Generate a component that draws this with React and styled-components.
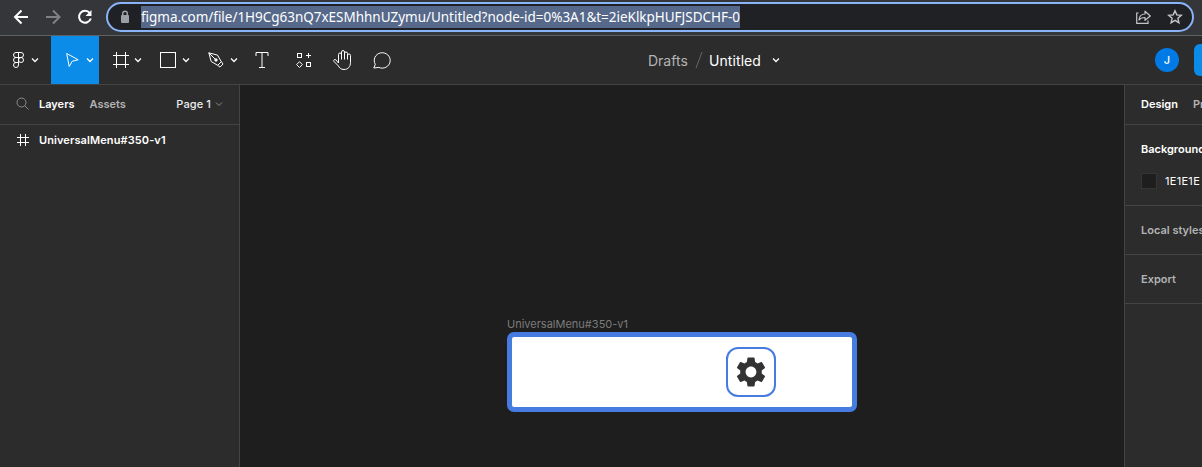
import React from "react";
import styled, { createGlobalStyle } from "styled-components";
import { MdSettings } from "react-icons/md";

const GlobalStyle = createGlobalStyle`
  * { box-sizing: border-box; }
  html, body { margin: 0; padding: 0; overflow: hidden; background: #1e1e1e; }
  svg { display: block; flex: none; }
`;

const Window = styled.div`
  width: 1202px;
  height: 467px;
  overflow: hidden;
  display: flex;
  flex-direction: column;
  background: #1e1e1e;
  color: #fff;
  font-family: Inter, "Liberation Sans", sans-serif;
  font-size: 11px;
`;

const BrowserBar = styled.header`
  height: 36px;
  flex: none;
  display: flex;
  align-items: flex-start;
  padding: 2px 8px 0 13px;
  background: #35363a;
  border-bottom: 1px solid #606163;
`;

const NavButtons = styled.div`
  display: flex;
  gap: 16px;
  width: 93px;
  padding-top: 7px;
`;

const AddressBar = styled.div`
  flex: 1;
  height: 30px;
  display: flex;
  align-items: center;
  padding: 0 9px 0 11px;
  border: 2px solid #8ab4f8;
  border-radius: 15px;
  background: #202124;
`;

const Url = styled.span`
  height: 22px;
  width: 599px;
  line-height: 22px;
  margin-left: 10px;
  margin-right: auto;
  background: #56698a;
  white-space: nowrap;
  font-family: "Noto Sans", "Open Sans", sans-serif;
  font-size: 13.5px;
  letter-spacing: -0.025px;
`;

const AddressActions = styled.div`
  display: flex;
  gap: 15px;
`;

const Toolbar = styled.div`
  height: 49px;
  flex: none;
  display: flex;
  background: #2c2c2c;
  border-bottom: 1px solid #444;
`;

const Tool = styled.div`
  width: ${(p) => p.$width}px;
  height: 48px;
  flex: none;
  display: flex;
  align-items: center;
  padding-left: ${(p) => p.$inset}px;
  gap: ${(p) => p.$gap ?? 5}px;
  background: ${(p) => (p.$active ? "#0c8ce9" : "transparent")};
`;

const FileTitle = styled.div`
  width: 507px;
  flex: none;
  display: flex;
  align-items: center;
  font-size: 14px;
`;

const Folder = styled.span`
  width: 47px;
  color: #b3b3b3;
`;

const FileName = styled.span`
  width: 63px;
  color: #fff;
  letter-spacing: 0.08px;
`;

const Avatar = styled.div`
  width: 24px;
  height: 24px;
  flex: none;
  margin: 12px 15px 0 0;
  border-radius: 50%;
  display: flex;
  align-items: center;
  justify-content: center;
  background: #007be5;
  font-weight: 500;
  font-size: 11px;
`;

const ShareButton = styled.div`
  width: 60px;
  height: 32px;
  flex: none;
  margin-top: 8px;
  border-radius: 6px;
  background: #0c8ce9;
`;

const Workspace = styled.main`
  flex: 1;
  display: flex;
  min-height: 0;
`;

const LayersPanel = styled.aside`
  width: 240px;
  flex: none;
  background: #2c2c2c;
  border-right: 1px solid #444;
`;

const LayersHeader = styled.div`
  height: 40px;
  display: flex;
  align-items: center;
  padding: 0 16px 2px;
  border-bottom: 1px solid #444;
`;

const Tab = styled.span`
  margin-left: ${(p) => p.$offset ?? 0}px;
  font-weight: 600;
  color: ${(p) => (p.$active ? "#fff" : "#b3b3b3")};
  white-space: nowrap;
`;

const PagePicker = styled.div`
  margin-left: auto;
  display: flex;
  align-items: center;
  gap: 4px;
  font-weight: 500;
  letter-spacing: 0.1px;
  color: #eee;
`;

const LayerRow = styled.div`
  height: 30px;
  display: flex;
  align-items: center;
  gap: 10px;
  padding-left: 17px;
  font-weight: 600;
  letter-spacing: 0.1px;
`;

const Canvas = styled.section`
  position: relative;
  flex: 1;
  min-width: 0;
  background: #1e1e1e;
`;

const Frame = styled.div`
  position: absolute;
  left: 267px;
  top: 233px;
  width: 350px;
`;

const FrameLabel = styled.div`
  height: 14px;
  line-height: 13px;
  color: #7b7b7b;
  white-space: nowrap;
`;

const FrameBody = styled.div`
  height: 80px;
  display: flex;
  align-items: flex-start;
  justify-content: flex-end;
  padding: 10px 76px 0 0;
  border: 5px solid #467ce0;
  border-radius: 7px;
  background: #fff;
`;

const SettingsButton = styled.div`
  width: 50px;
  height: 50px;
  display: flex;
  align-items: center;
  justify-content: center;
  padding: 0 1px 1px 0;
  border: 2px solid #467ce0;
  border-radius: 12px;
  color: #333;
`;

const DesignPanel = styled.aside`
  width: 78px;
  flex: none;
  overflow: hidden;
  background: #2c2c2c;
  border-left: 1px solid #444;
`;

const PanelSection = styled.div`
  height: ${(p) => p.$height}px;
  display: flex;
  flex-direction: ${(p) => (p.$stacked ? "column" : "row")};
  align-items: ${(p) => (p.$stacked ? "flex-start" : "center")};
  gap: ${(p) => p.$gap ?? 0}px;
  padding: ${(p) => p.$pad ?? "0 0 0 16px"};
  border-bottom: 1px solid #444;
  white-space: nowrap;
`;

const ColorRow = styled.div`
  display: flex;
  align-items: center;
  gap: 8px;
  font-weight: 400;
  letter-spacing: 0.3px;
`;

const Swatch = styled.span`
  width: 16px;
  height: 16px;
  flex: none;
  background: #1e1e1e;
  border: 1px solid #363636;
`;

const Line = ({ w, h, stroke = 1, color = "#fff", children }) => (
  <svg width={w} height={h} viewBox={`0 0 ${w} ${h}`} fill="none" stroke={color} strokeWidth={stroke}>
    {children}
  </svg>
);

const Chevron = ({ color = "#fff", stroke = 1.25 }) => (
  <Line w={8} h={6} color={color} stroke={stroke}>
    <path d="M1 1.5 4 4.500 7 1.500" />
  </Line>
);

export default function App() {
  return (
    <Window>
      <GlobalStyle />
      <BrowserBar>
        <NavButtons>
          <Line w={16} h={16} stroke={2}>
            <path d="M15 8H2.5M8.5 1.5 2 8l6.500 6.500" />
          </Line>
          <Line w={16} h={16} stroke={2} color="#808185">
            <path d="M1 8h13M8 1.500 14.500 8 8 14.500" />
          </Line>
          <Line w={16} h={16} stroke={2}>
            <path d="M12.800 4A6 6 0 1 0 13.800 9.500" />
            <path d="M14.500 1v6h-6l2.500-2.500z" fill="#fff" stroke="none" />
          </Line>
        </NavButtons>
        <AddressBar>
          <Line w={12} h={14} stroke={1.5} color="#9aa0a6">
            <rect x="2" y="5" width="8" height="8" rx="1" fill="#9aa0a6" stroke="none" />
            <path d="M3.700 6V3.500a2.300 2.300 0 0 1 4.600 0V6" />
          </Line>
          <Url>figma.com/file/1H9Cg63nQ7xESMhhnUZymu/Untitled?node-id=0%3A1&amp;t=2ieKlkpHUFJSDCHF-0</Url>
          <AddressActions>
            <Line w={17} h={16} stroke={1.2} color="#c3c4c6">
              <path d="M3.500 4H1.700v10.300H13V11.500" />
              <path d="M4 11c.4-4 2.500-6 6-6V2.200L15.300 7 10 11.300V8.500C7.500 8.500 5.500 9 4 11z" strokeLinejoin="round" />
            </Line>
            <Line w={16} h={16} stroke={1.4} color="#c3c4c6">
              <path d="m8 1.800 1.800 4.100 4.500.4-3.400 3 1 4.400L8 11.400l-3.900 2.300 1-4.400-3.400-3 4.500-.4z" />
            </Line>
          </AddressActions>
        </AddressBar>
      </BrowserBar>

      <Toolbar>
        <Tool $width={51} $inset={13} $gap={7}>
          <Line w={11} h={16}>
            <path d="M5.500.5H3a2.500 2.500 0 0 0 0 5h2.500zM5.500.5H8a2.500 2.500 0 0 1 0 5H5.500zM5.500 5.500H3a2.500 2.500 0 0 0 0 5h2.500zM5.500 10.500H3A2.500 2.500 0 1 0 5.500 13z" />
            <circle cx="8" cy="8" r="2.500" />
          </Line>
          <Chevron />
        </Tool>
        <Tool $width={48} $inset={14} $gap={6} $active>
          <Line w={15} h={16}>
            <path d="M1.700 1.500 13.200 7.800 7.300 9.200 4.200 14.500z" strokeLinejoin="round" />
          </Line>
          <Chevron />
        </Tool>
        <Tool $width={48} $inset={14} $gap={5}>
          <Line w={16} h={16}>
            <path d="M3.500 0v16M12.500 0v16M0 3.500h16M0 12.500h16" />
          </Line>
          <Chevron />
        </Tool>
        <Tool $width={48} $inset={13} $gap={6}>
          <Line w={16} h={16}>
            <rect x=".5" y=".5" width="15" height="15" />
          </Line>
          <Chevron />
        </Tool>
        <Tool $width={48} $inset={13} $gap={6}>
          <Line w={16} h={16}>
            <path d="M.8.800 9.500 3.100 13.300 9.700 9.700 13.300 3.200 9.500zM13.300 9.700l1.800 2.300-3.100 3.100-2.300-1.800M.8.800l6.300 6.300" strokeLinejoin="round" />
            <circle cx="8" cy="8" r="1.200" fill="#fff" />
          </Line>
          <Chevron />
        </Tool>
        <Tool $width={48} $inset={12}>
          <Line w={14} h={16}>
            <path d="M1 4V.500h12V4M7 .5v15M4 15.500h6" />
          </Line>
        </Tool>
        <Tool $width={40} $inset={5}>
          <Line w={15} h={15}>
            <rect x="1.500" y="1" width="4" height="4" stroke="none" />
            <rect x="1.500" y="0.500" width="4" height="4" />
            <rect x="10.500" y="9.500" width="4" height="4" />
            <path d="M12.500 0v5M10 2.500h5M3.500 8.700 6.400 11.600 3.500 14.500.6 11.600z" />
          </Line>
        </Tool>
        <Tool $width={38} $inset={2}>
          <Line w={19} h={20}>
            <path d="M5.500 13V4.500a1.500 1.500 0 0 1 3 0V9.500M8.500 9V2a1.500 1.500 0 0 1 3 0v7.500M11.500 3.500a1.500 1.500 0 0 1 3 0v6M14.500 5.500a1.500 1.500 0 0 1 3 0v7c0 4-2.500 7-6.500 7-3 0-4.500-1.500-6-4L1 11.500c-1-1.700 1-2.700 2-1.500L5.500 13" />
          </Line>
        </Tool>
        <Tool $width={279} $inset={4}>
          <Line w={19} h={17}>
            <path d="M.8 16 2.300 12.300A8 7.700 0 1 1 5.800 15.400L.8 16z" strokeLinejoin="round" />
          </Line>
        </Tool>
        <FileTitle>
          <Folder>Drafts</Folder>
          <Line w={14} h={18} color="#666">
            <path d="M1 17 7 1" />
          </Line>
          <FileName>Untitled</FileName>
          <Chevron />
        </FileTitle>
        <Avatar>J</Avatar>
        <ShareButton />
      </Toolbar>

      <Workspace>
        <LayersPanel>
          <LayersHeader>
            <Line w={13} h={13} color="#8c8c8c">
              <circle cx="5.500" cy="5.500" r="4.500" />
              <path d="m8.800 8.800 3.700 3.700" />
            </Line>
            <Tab $active $offset={10}>Layers</Tab>
            <Tab $offset={15}>Assets</Tab>
            <PagePicker>
              Page 1
              <Chevron color="#8c8c8c" stroke={1} />
            </PagePicker>
          </LayersHeader>
          <LayerRow>
            <Line w={12} h={12}>
              <path d="M3.500 0v12M8.500 0v12M0 3.500h12M0 8.500h12" />
            </Line>
            UniversalMenu#350-v1
          </LayerRow>
        </LayersPanel>

        <Canvas>
          <Frame>
            <FrameLabel>UniversalMenu#350-v1</FrameLabel>
            <FrameBody>
              <SettingsButton>
                <MdSettings size={36} />
              </SettingsButton>
            </FrameBody>
          </Frame>
        </Canvas>

        <DesignPanel>
          <PanelSection $height={40} $pad="0 0 2px 16px">
            <Tab $active>Design</Tab>
            <Tab $offset={15}>Prototype</Tab>
          </PanelSection>
          <PanelSection $height={81} $stacked $gap={17} $pad="17px 0 0 16px">
            <Tab $active>Background</Tab>
            <ColorRow>
              <Swatch />
              1E1E1E
            </ColorRow>
          </PanelSection>
          <PanelSection $height={49}>
            <Tab>Local styles</Tab>
          </PanelSection>
          <PanelSection $height={49}>
            <Tab>Export</Tab>
          </PanelSection>
        </DesignPanel>
      </Workspace>
    </Window>
  );
}
